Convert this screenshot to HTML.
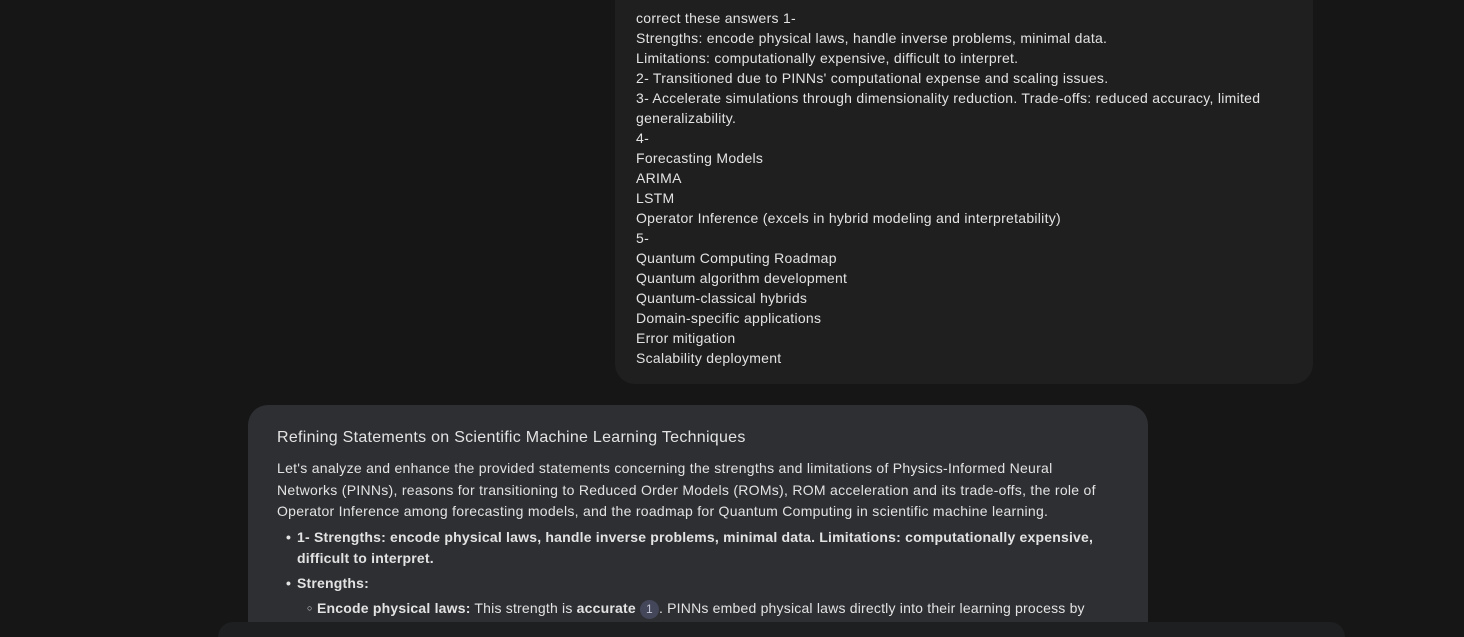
<!DOCTYPE html>
<html style="overflow:hidden;height:637px"><head><style>
body{margin:0;width:1464px;height:637px;overflow:hidden;background:#161616;font-family:"Liberation Sans",sans-serif;position:relative;color:#e3e3e3;letter-spacing:0.28px}
.user{position:absolute;left:615px;top:-20px;width:698px;height:404px;background:#1f1f1f;border-radius:20px}
.ut{position:absolute;left:636px;top:8px;font-size:14px;line-height:20px;color:#e3e3e3;width:660px}
.card{position:absolute;left:248px;top:405px;width:900px;height:260px;background:#2e2f33;border-radius:20px}
.c{position:absolute;left:277px;top:427px;width:845px;font-size:14px;color:#e3e3e3}
h1{font-size:16px;font-weight:normal;margin:0 0 9px;line-height:22px}
p{margin:0;line-height:21.5px;width:835px}
ul{margin:4px 0 0;padding-left:20px;list-style:none}
li{position:relative;line-height:21px;margin-bottom:4px;font-weight:bold;letter-spacing:0.2px}
li:before{content:"•";position:absolute;left:-11px}
li.s{margin-left:20px;font-weight:normal}
li.s:before{content:"○";font-size:9px;left:-10px}
.n{display:inline-block;background:#44475a;border-radius:10px;width:19px;height:19px;text-align:center;line-height:19px;font-size:12px;color:#c4c7d5;font-weight:normal}
.bar{position:absolute;left:218px;top:622px;width:1127px;height:15px;background:#1e1f20;border-radius:28px 28px 0 0}
</style></head><body>
<div class="user"></div>
<div class="ut">correct these answers 1-<br>Strengths: encode physical laws, handle inverse problems, minimal data.<br>Limitations: computationally expensive, difficult to interpret.<br>2- Transitioned due to PINNs' computational expense and scaling issues.<br>3- Accelerate simulations through dimensionality reduction. Trade-offs: reduced accuracy, limited generalizability.<br>4-<br>Forecasting Models<br>ARIMA<br>LSTM<br>Operator Inference (excels in hybrid modeling and interpretability)<br>5-<br>Quantum Computing Roadmap<br>Quantum algorithm development<br>Quantum-classical hybrids<br>Domain-specific applications<br>Error mitigation<br>Scalability deployment</div>
<div class="card"></div>
<div class="c">
<h1>Refining Statements on Scientific Machine Learning Techniques</h1>
<p>Let's analyze and enhance the provided statements concerning the strengths and limitations of Physics-Informed Neural<br>Networks (PINNs), reasons for transitioning to Reduced Order Models (ROMs), ROM acceleration and its trade-offs, the role of<br>Operator Inference among forecasting models, and the roadmap for Quantum Computing in scientific machine learning.</p>
<ul>
<li>1- Strengths: encode physical laws, handle inverse problems, minimal data. Limitations: computationally expensive, difficult to interpret.</li>
<li>Strengths:</li>
<li class="s"><b>Encode physical laws:</b> This strength is <b>accurate</b> <span class="n">1</span>. PINNs embed physical laws directly into their learning process by</li>
</ul>
</div>
<div class="bar"></div>
</body></html>
